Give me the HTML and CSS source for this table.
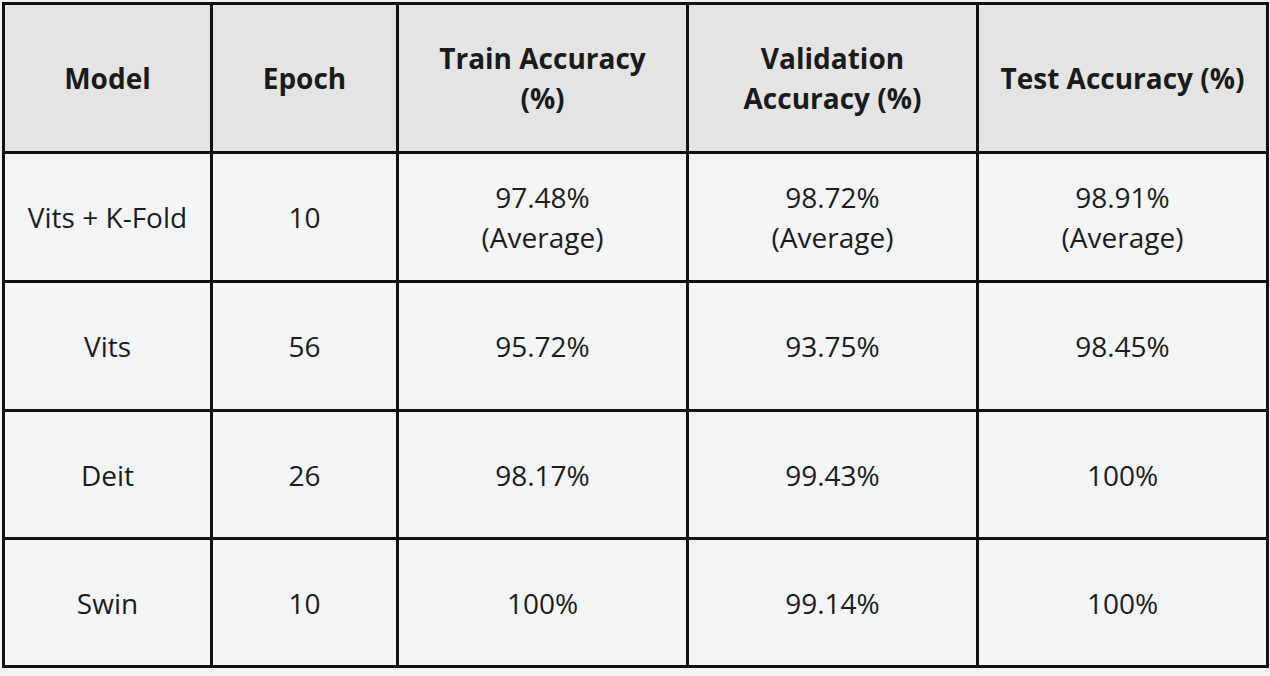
FILE: index.html
```html
<!DOCTYPE html>
<html lang="en">
<head>
<meta charset="utf-8">
<title>Model Accuracy</title>
<link rel="stylesheet" href="styles.css">
</head>
<body>
<table class="results">
  <colgroup>
    <col class="c-model">
    <col class="c-epoch">
    <col class="c-acc">
    <col class="c-acc">
    <col class="c-acc">
  </colgroup>
  <thead>
    <tr class="head-row">
      <th>Model</th>
      <th>Epoch</th>
      <th>Train Accuracy<br>(%)</th>
      <th>Validation<br>Accuracy (%)</th>
      <th>Test Accuracy (%)</th>
    </tr>
  </thead>
  <tbody>
    <tr class="row-tall">
      <td>Vits + K-Fold</td>
      <td>10</td>
      <td>97.48%<br>(Average)</td>
      <td>98.72%<br>(Average)</td>
      <td>98.91%<br>(Average)</td>
    </tr>
    <tr class="row-tall">
      <td>Vits</td>
      <td>56</td>
      <td>95.72%</td>
      <td>93.75%</td>
      <td>98.45%</td>
    </tr>
    <tr class="row">
      <td>Deit</td>
      <td>26</td>
      <td>98.17%</td>
      <td>99.43%</td>
      <td>100%</td>
    </tr>
    <tr class="row">
      <td>Swin</td>
      <td>10</td>
      <td>100%</td>
      <td>99.14%</td>
      <td>100%</td>
    </tr>
  </tbody>
</table>
</body>
</html>
```

FILE: styles.css
```css
html, body {
  margin: 0;
  padding: 0;
  background: #f2f3f5;
}

body {
  padding: 2px 0 0 2px;
  font-family: "Open Sans", "Noto Sans", sans-serif;
  color: #1c1c1c;
}

.results {
  table-layout: fixed;
  width: 1267px;
  border-collapse: separate;
  border-spacing: 3px;
  background: #111111;
}

.c-model { width: 205px; }
.c-epoch { width: 183px; }
.c-acc { width: 287px; }

.results th,
.results td {
  padding: 0;
  text-align: center;
  vertical-align: middle;
  font-size: 28px;
  line-height: 40px;
}

.results th {
  background: #e4e4e4;
  font-weight: 700;
  color: #1a1a1a;
}

.results td {
  background: #f4f5f7;
  font-weight: 400;
}

.head-row { height: 146px; }
.row-tall { height: 126px; }
.row { height: 125px; }
```
